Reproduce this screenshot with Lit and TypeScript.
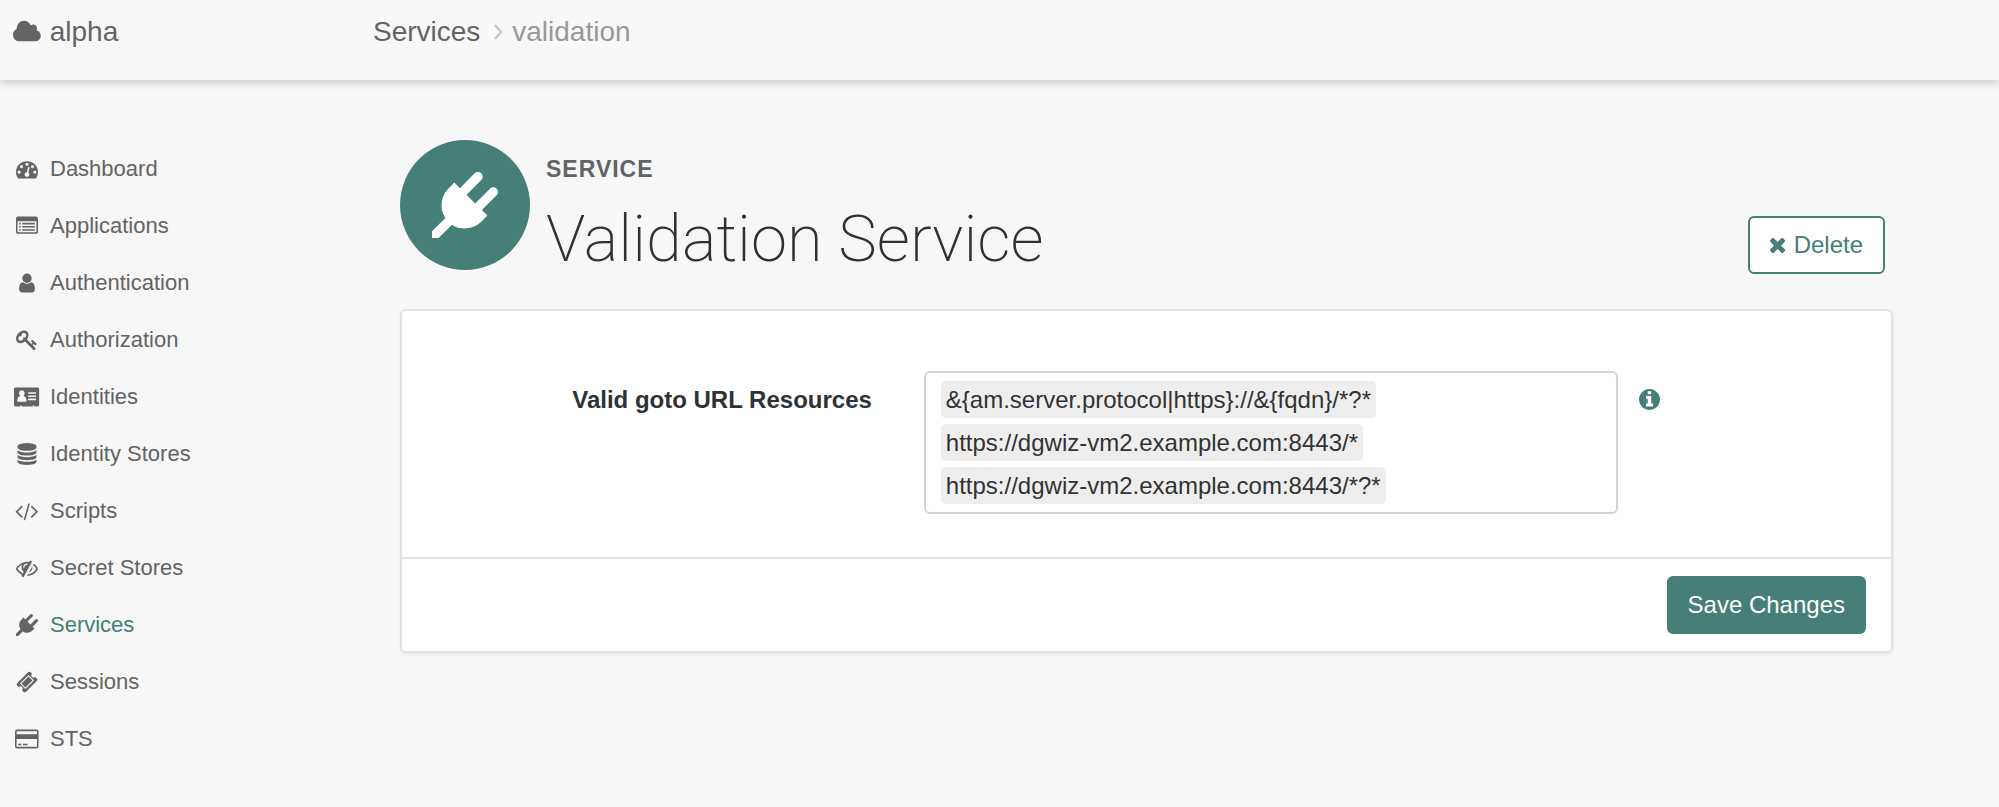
import { LitElement, html, css, svg } from "lit";
import { customElement, property, state } from "lit/decorators.js";
import { classMap } from "lit/directives/class-map.js";

interface Glyph {
  box: string;
  art: unknown;
}

const glyphs: Record<string, Glyph> = {
  cloud: {
    box: "0 0 2048 1792",
    art: svg`<path d="M1984 1152q0 159-112.5 271.5t-271.5 112.5h-1088q-185 0-316.5-131.5t-131.5-316.5q0-132 71-241.5t187-163.5q-2-28-2-43 0-212 150-362t362-150q158 0 286.5 88t187.5 230q70-62 166-62 106 0 181 75t75 181q0 75-41 138 129 30 213 134.5t84 239.5z"/>`,
  },
  dashboard: {
    box: "0 0 1792 1792",
    art: svg`<path d="M384 1152q0-53-37.5-90.5t-90.5-37.5-90.5 37.5-37.5 90.5 37.5 90.5 90.5 37.5 90.5-37.5 37.5-90.5zm192-448q0-53-37.5-90.5t-90.5-37.5-90.5 37.5-37.5 90.5 37.5 90.5 90.5 37.5 90.5-37.5 37.5-90.5zm428 481l101-382q6-26-7.5-48.5t-38.5-29.5-48 6.5-30 39.5l-101 382q-60 5-107 43.5t-63 98.5q-20 77 20 146t117 89 146-20 89-117q16-60-6-117t-72-91zm660-33q0-53-37.5-90.5t-90.5-37.5-90.5 37.5-37.5 90.5 37.5 90.5 90.5 37.5 90.5-37.5 37.5-90.5zm-640-640q0-53-37.5-90.5t-90.5-37.5-90.5 37.5-37.5 90.5 37.5 90.5 90.5 37.5 90.5-37.5 37.5-90.5zm448 192q0-53-37.5-90.5t-90.5-37.5-90.5 37.5-37.5 90.5 37.5 90.5 90.5 37.5 90.5-37.5 37.5-90.5zm320 448q0 261-141 483-19 29-54 29h-1402q-35 0-54-29-141-221-141-483 0-182 71-348t191-286 286-191 348-71 348 71 286 191 191 286 71 348z"/>`,
  },
  list: {
    box: "0 0 1792 1792",
    art: svg`<path fill-rule="evenodd" d="M160 128h1472q66 0 113 47t47 113v1088q0 66-47 113t-113 47H160q-66 0-113-47T0 1376V288q0-66 47-113t113-47zM128 512v832q0 64 64 64h1408q64 0 64-64V512z"/><path d="M256 640h128v128H256zM512 640h1024v128H512zM256 896h128v128H256zM512 896h1024v128H512zM256 1152h128v128H256zM512 1152h1024v128H512z"/>`,
  },
  user: {
    box: "0 0 1792 1792",
    art: svg`<path d="M1536 1399q0 109-62.5 187t-150.5 78h-854q-88 0-150.5-78t-62.5-187q0-85 8.5-160.5t31.5-152 58.5-131 94-89 134.5-34.5q131 128 313 128t313-128q76 0 134.5 34.5t94 89 58.5 131 31.5 152 8.5 160.5zm-256-887q0 159-112.5 271.5t-271.5 112.5-271.5-112.5-112.5-271.5 112.5-271.5 271.5-112.5 271.5 112.5 112.5 271.5z"/>`,
  },
  key: {
    box: "0 0 1792 1792",
    art: svg`<path d="M832 512q0-80-56-136t-136-56-136 56-56 136q0 42 19 83-41-19-83-19-80 0-136 56t-56 136 56 136 136 56 136-56 56-136q0-42-19-83 41 19 83 19 80 0 136-56t56-136zm851 704q0 17-49 66t-66 49q-9 0-28.5-16t-36.5-33-38.5-40-24.5-26l-96 96 220 220q28 28 28 68 0 42-39 81t-81 39q-40 0-68-28l-671-671q-176 131-365 131-163 0-265.5-102.5t-102.5-265.5q0-160 95-313t248-248 313-95q163 0 265.5 102.5t102.5 265.5q0 189-131 365l355 355 96-96q-3-3-26-24.5t-40-38.5-33-36.5-16-28.5q0-17 49-66t66-49q13 0 23 10 6 6 46 44.5t82 79.5 86.5 86 73 78 28.5 41z"/>`,
  },
  card: {
    box: "0 0 2048 1792",
    art: svg`<path fill-rule="evenodd" d="M112 128h1824q46 0 79 33t33 79v1312q0 46-33 79t-79 33h-272v-64q0-40-64-40t-64 40v64H640v-64q0-40-64-40t-64 40v64H112q-46 0-79-33t-33-79V240q0-46 33-79t79-33zM640 352c-130 0-224 100-224 240 0 90 40 170 100 214-170 20-244 150-260 400q-4 74 64 74h640q68 0 64-74c-16-250-90-380-260-400 60-44 100-124 100-214 0-140-94-240-224-240zM1152 512v128h640V512zM1152 768v128h640V768zM1152 1024v128h640v-128z"/>`,
  },
  database: {
    box: "0 0 1792 1792",
    art: svg`<path d="M896 768q237 0 443-43t325-127v170q0 69-103 128t-280 93.5-385 34.5-385-34.5-280-93.5-103-128v-170q119 84 325 127t443 43zm0 768q237 0 443-43t325-127v170q0 69-103 128t-280 93.5-385 34.5-385-34.5-280-93.5-103-128v-170q119 84 325 127t443 43zm0-384q237 0 443-43t325-127v170q0 69-103 128t-280 93.5-385 34.5-385-34.5-280-93.5-103-128v-170q119 84 325 127t443 43zm0-1152q208 0 385 34.5t280 93.5 103 128v128q0 69-103 128t-280 93.5-385 34.5-385-34.5-280-93.5-103-128v-128q0-69 103-128t280-93.5 385-34.5z"/>`,
  },
  code: {
    box: "0 0 1920 1792",
    art: svg`<path d="M617 1399l-50 50q-10 10-23 10t-23-10l-466-466q-10-10-10-23t10-23l466-466q10-10 23-10t23 10l50 50q10 10 10 23t-10 23l-393 393 393 393q10 10 10 23t-10 23zm591-1067l-373 1291q-4 13-15.5 19.5t-23.5 2.5l-62-17q-13-4-19.5-15.5t-2.5-24.5l373-1291q4-13 15.5-19.5t23.5-2.5l62 17q13 4 19.5 15.5t2.5 24.5zm657 651l-466 466q-10 10-23 10t-23-10l-50-50q-10-10-10-23t10-23l393-393-393-393q-10-10-10-23t10-23l50-50q10-10 23-10t23 10l466 466q10 10 10 23t-10 23z"/>`,
  },
  hidden: {
    box: "0 0 1792 1792",
    art: svg`<path d="M555 1335l78-141q-87-63-136-159t-49-203q0-121 61-225-229 117-381 353 167 258 427 375zm389-759q0-20-14-34t-34-14q-125 0-214.5 89.5t-89.5 214.5q0 20 14 34t34 14 34-14 14-34q0-86 61-147t147-61q20 0 34-14t14-34zm363-191q0 7-1 9-106 189-316 567t-315 566l-49 89q-10 16-28 16-12 0-134-70-16-10-16-28 0-12 44-87-143-65-263.5-173t-208.5-245q-20-31-20-69t20-69q153-235 380-371t496-136q89 0 180 17l54-97q10-16 28-16 5 0 18 6t31 15.5 33 18.5 31.5 18.5 19.5 11.5q16 10 16 27zm37 447q0 139-79 253.5t-209 164.5l280-502q8 45 8 84zm448 128q0 35-20 69-39 64-109 145-150 172-347.5 267t-419.5 95l74-132q212-18 392.5-137t301.5-307q-115-179-282-294l63-112q95 64 182.5 153t144.5 184q20 34 20 69z"/>`,
  },
  plug: {
    box: "0 0 1792 1792",
    art: svg`<path d="M1755 453q37 38 37 90.5t-37 90.5l-401 400 150 150-160 160q-163 163-389.5 186.5t-411.5-100.5l-362 362h-181v-181l362-362q-124-185-100.5-411.5t186.5-389.5l160-160 150 150 400-401q38-37 91-37t90 37 37 90.5-37 90.5l-400 401 234 234 401-400q38-37 91-37t90 37z"/>`,
  },
  ticket: {
    box: "0 0 1792 1792",
    art: svg`<path d="M1024 452l316 316-572 572-316-316zm-211 979l618-618q19-19 19-45t-19-45l-362-362q-18-18-45-18t-45 18l-618 618q-19 19-19 45t19 45l362 362q18 18 45 18t45-18zm889-637l-907 908q-37 37-90.5 37t-90.5-37l-126-126q56-56 56-136t-56-136-136-56-136 56l-125-126q-37-37-37-90.5t37-90.5l907-906q37-37 90.5-37t90.5 37l125 125q-56 56-56 136t56 136 136 56 136-56l126 125q37 37 37 90.5t-37 90.5z"/>`,
  },
  credit: {
    box: "0 0 1920 1792",
    art: svg`<path fill-rule="evenodd" d="M160 128h1600q66 0 113 47t47 113v1216q0 66-47 113t-113 47H160q-66 0-113-47T0 1504V288q0-66 47-113t113-47zM160 256q-32 0-32 32v224h1664V288q0-32-32-32zM128 896v608q0 32 32 32h1600q32 0 32-32V896z"/><path d="M256 1280h256v128H256zM640 1280h384v128H640z"/>`,
  },
  times: {
    box: "302 302 1188 1252",
    art: svg`<path d="M1490 1322q0 40-28 68l-136 136q-28 28-68 28t-68-28l-294-294-294 294q-28 28-68 28t-68-28l-136-136q-28-28-28-68t28-68l294-294-294-294q-28-28-28-68t28-68l136-136q28-28 68-28t68 28l294 294 294-294q28-28 68-28t68 28l136 136q28 28 28 68t-28 68l-294 294 294 294q28 28 28 68z"/>`,
  },
  info: {
    box: "128 128 1536 1536",
    art: svg`<path d="M1152 1376v-160q0-14-9-23t-23-9h-96v-512q0-14-9-23t-23-9h-320q-14 0-23 9t-9 23v160q0 14 9 23t23 9h96v320h-96q-14 0-23 9t-9 23v160q0 14 9 23t23 9h448q14 0 23-9t9-23zm-128-896v-160q0-14-9-23t-23-9h-192q-14 0-23 9t-9 23v160q0 14 9 23t23 9h192q14 0 23-9t9-23zm640 416q0 209-103 385.5t-279.5 279.5-385.5 103-385.5-103-279.5-279.5-103-385.5 103-385.5 279.5-279.5 385.5-103 385.5 103 279.5 279.5 103 385.5z"/>`,
  },
  chevron: {
    box: "0 0 10 18",
    art: svg`<path d="M1 1l7 8-7 8" fill="none" stroke="currentColor" stroke-width="2.6"/>`,
  },
};

@customElement("ui-icon")
class UiIcon extends LitElement {
  @property() name = "";

  static styles = css`
    :host {
      display: inline-flex;
      height: 22px;
    }
    .glyph {
      display: block;
      height: 100%;
      width: auto;
      fill: currentColor;
    }
  `;

  render() {
    const g = glyphs[this.name];
    return html`<svg class="glyph" viewBox=${g.box} aria-hidden="true">${g.art}</svg>`;
  }
}

const links = [
  { label: "Dashboard", icon: "dashboard" },
  { label: "Applications", icon: "list" },
  { label: "Authentication", icon: "user" },
  { label: "Authorization", icon: "key" },
  { label: "Identities", icon: "card" },
  { label: "Identity Stores", icon: "database" },
  { label: "Scripts", icon: "code" },
  { label: "Secret Stores", icon: "hidden" },
  { label: "Services", icon: "plug" },
  { label: "Sessions", icon: "ticket" },
  { label: "STS", icon: "credit" },
];

@customElement("app-root")
class AppRoot extends LitElement {
  @state() private current = "Services";
  @state() private urls = [
    "&{am.server.protocol|https}://&{fqdn}/*?*",
    "https://dgwiz-vm2.example.com:8443/*",
    "https://dgwiz-vm2.example.com:8443/*?*",
  ];

  static styles = css`
    :host {
      display: block;
      min-height: 100vh;
      background: #f7f7f7;
      color: #646464;
      font-family: "Liberation Sans", Arial, sans-serif;
      font-size: 24px;
    }
    * {
      box-sizing: border-box;
    }
    a {
      color: inherit;
      text-decoration: none;
    }
    .bar {
      display: grid;
      grid-template-columns: 373px 1fr;
      height: 80px;
      padding-top: 16px;
      font-size: 28px;
      line-height: 32px;
      background: #f8f8f8;
      box-shadow: 0 3px 8px rgba(0, 0, 0, 0.18);
    }
    .realm {
      display: flex;
      align-items: center;
      gap: 8px;
      height: 32px;
      padding-left: 12px;
    }
    .realm ui-icon {
      height: 26px;
    }
    .crumbs {
      display: flex;
      align-items: center;
      height: 32px;
    }
    .crumbs ui-icon {
      height: 16px;
      margin: 0 9px 0 14px;
      color: #c8c8c8;
    }
    .here {
      color: #999;
    }
    .layout {
      display: grid;
      grid-template-columns: 400px 1fr;
    }
    .menu {
      margin: 0;
      padding: 60px 0 0 11px;
      list-style: none;
      font-size: 22px;
      line-height: 57px;
    }
    .item {
      display: flex;
      align-items: center;
      gap: 7px;
    }
    .item ui-icon {
      width: 32px;
      justify-content: center;
    }
    .active {
      color: #457f78;
    }
    .active ui-icon {
      color: #646464;
    }
    .page {
      padding: 60px 106px 40px 0;
    }
    .head {
      display: flex;
      gap: 16px;
      margin-bottom: 35px;
    }
    .badge {
      display: flex;
      align-items: center;
      justify-content: center;
      flex: none;
      width: 130px;
      height: 130px;
      border-radius: 50%;
      background: #457f78;
      color: #fff;
    }
    .badge ui-icon {
      height: 66px;
    }
    .titles {
      flex: 1;
      padding-top: 16px;
    }
    .kind {
      margin: 0;
      font-size: 23px;
      line-height: 26px;
      letter-spacing: 1px;
      text-transform: uppercase;
    }
    .title {
      margin: 22px 0 0;
      font-family: Roboto, "Liberation Sans", sans-serif;
      font-size: 65px;
      font-weight: 200;
      line-height: 70px;
      color: #2c3235;
    }
    .btn {
      display: flex;
      align-items: center;
      gap: 8px;
      height: 58px;
      padding: 0 20px;
      border: 2px solid #457f78;
      border-radius: 6px;
      font: inherit;
    }
    .outline {
      align-self: flex-end;
      margin: 0 8px 0 0;
      background: #fff;
      color: #457f78;
    }
    .outline ui-icon {
      height: 16px;
    }
    .solid {
      padding: 0 19px;
      background: #457f78;
      color: #fff;
    }
    .panel {
      border: 2px solid #e3e3e3;
      border-radius: 6px;
      background: #fff;
      box-shadow: 0 1px 3px rgba(0, 0, 0, 0.08);
    }
    .row {
      display: grid;
      grid-template-columns: 33.3% 49.8% 1fr;
      padding: 60px 0 43px;
    }
    .label {
      padding: 15px 26px 0;
      text-align: right;
      font-weight: 700;
      line-height: 28px;
      color: #2c3235;
    }
    .tags {
      display: flex;
      flex-wrap: wrap;
      gap: 6px;
      margin: 0 21px 0 26px;
      padding: 8px 15px;
      border: 2px solid #d4d4d4;
      border-radius: 6px;
    }
    .tag {
      padding: 0 5px;
      border-radius: 5px;
      background: #eee;
      color: #333;
      line-height: 37px;
    }
    .entry {
      flex: 1;
      min-width: 20px;
      width: 20px;
      padding: 0;
      border: 0;
      outline: 0;
      background: transparent;
      font: inherit;
    }
    .help {
      justify-self: start;
      align-self: start;
      margin-top: 18px;
      padding: 0;
      border: 0;
      background: none;
      color: #457f78;
      line-height: 0;
    }
    .help ui-icon {
      height: 21px;
    }
    .foot {
      display: flex;
      justify-content: flex-end;
      padding: 17px 25px;
      border-top: 2px solid #e3e3e3;
    }
  `;

  private save(e: Event) {
    e.preventDefault();
  }

  render() {
    return html`
      <header class="bar">
        <a class="realm" href="#"><ui-icon name="cloud"></ui-icon>alpha</a>
        <nav class="crumbs" aria-label="Breadcrumb">
          <a href="#services">Services</a>
          <ui-icon name="chevron"></ui-icon>
          <span class="here">validation</span>
        </nav>
      </header>
      <div class="layout">
        <nav>
          <ul class="menu">
            ${links.map(
              (l) => html`<li>
                <a
                  class=${classMap({ item: true, active: l.label === this.current })}
                  href="#${l.label}"
                  @click=${() => (this.current = l.label)}
                  ><ui-icon name=${l.icon}></ui-icon>${l.label}</a
                >
              </li>`
            )}
          </ul>
        </nav>
        <main class="page">
          <header class="head">
            <div class="badge"><ui-icon name="plug"></ui-icon></div>
            <div class="titles">
              <h4 class="kind">Service</h4>
              <h1 class="title">Validation Service</h1>
            </div>
            <button class="btn outline" type="button"><ui-icon name="times"></ui-icon>Delete</button>
          </header>
          <form class="panel" @submit=${this.save}>
            <div class="row">
              <label class="label" for="urls">Valid goto URL Resources</label>
              <div class="tags">
                ${this.urls.map((u) => html`<span class="tag">${u}</span>`)}
                <input class="entry" id="urls" type="text" autocomplete="off" />
              </div>
              <button class="help" type="button" aria-label="Help"><ui-icon name="info"></ui-icon></button>
            </div>
            <div class="foot">
              <button class="btn solid" type="submit">Save Changes</button>
            </div>
          </form>
        </main>
      </div>
    `;
  }
}
